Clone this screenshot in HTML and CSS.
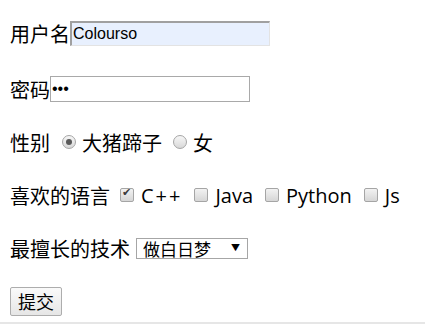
FILE: index.html
```html
<!DOCTYPE html>
<html lang="zh">
<head>
<meta charset="UTF-8">
<title>表单</title>
<link rel="stylesheet" href="styles.css">
</head>
<body>
<form class="form">
    <div class="row row-first">
        <label>用户名</label><input type="text" class="text-input autofill" value="Colourso">
    </div>
    <div class="row">
        <label>密码</label><input type="password" class="text-input" value="123">
    </div>
    <div class="row">
        <span class="label">性别</span>
        <input type="radio" name="sex" class="radio" checked><span>大猪蹄子</span>
        <input type="radio" name="sex" class="radio"><span>女</span>
    </div>
    <div class="row">
        <span class="label label-lang">喜欢的语言</span>
        <input type="checkbox" class="check" checked><span class="latin cpp">C++</span>
        <input type="checkbox" class="check"><span class="latin">Java</span>
        <input type="checkbox" class="check"><span class="latin">Python</span>
        <input type="checkbox" class="check"><span class="latin">Js</span>
    </div>
    <div class="row">
        <span class="label">最擅长的技术</span>
        <span class="select-wrap">
            <select class="select">
                <option>做白日梦</option>
                <option>写代码</option>
            </select>
        </span>
    </div>
    <div class="row">
        <button type="button" class="btn">提交</button>
    </div>
</form>
<div class="bottom-line"></div>
</body>
</html>
```

FILE: styles.css
```css
body {
    margin: 0;
    font-family: "Noto Sans CJK SC", sans-serif;
    font-size: 20px;
    color: #000;
    background: #fff;
}

.form {
    display: flex;
    flex-direction: column;
    gap: 27px;
    padding: 20px 10px 0;
}

.row {
    display: flex;
    align-items: center;
    height: 26px;
    white-space: nowrap;
}

.row-first {
    margin-bottom: 3px;
}

.label {
    margin-right: 12px;
}

.label-lang {
    margin-right: 10px;
}

/* 文本框 */
.text-input {
    box-sizing: border-box;
    width: 200px;
    height: 26px;
    margin: 0;
    padding: 0 1px;
    border: 1px solid #a9a9a9;
    font-family: "Liberation Sans", Arial, sans-serif;
    font-size: 16px;
    outline: none;
}

.autofill {
    height: 25px;
    border-width: 2px 1px 1px 2px;
    border-style: solid;
    border-color: #a0a0a0 #e3e3e3 #e3e3e3 #a0a0a0;
    background: #e8f0fe;
}

/* 单选框 */
.radio {
    appearance: none;
    box-sizing: border-box;
    width: 14px;
    height: 14px;
    margin: 0 6px 0 0;
    border: 1px solid #a5a5a5;
    border-radius: 50%;
    background: linear-gradient(#f7f7f7, #d8d8d8);
    position: relative;
}

.radio:checked::after {
    content: "";
    position: absolute;
    left: 3px;
    top: 3px;
    width: 6px;
    height: 6px;
    border-radius: 50%;
    background: #595959;
}

.radio + span {
    margin-right: 11px;
}

/* 复选框 */
.check {
    appearance: none;
    box-sizing: border-box;
    width: 14px;
    height: 14px;
    margin: 0 7px 0 0;
    border: 1px solid #a5a5a5;
    border-radius: 2px;
    background: linear-gradient(#f2f2f2, #d6d6d6);
    position: relative;
}

.check:checked::after {
    content: "✔";
    position: absolute;
    left: 1px;
    top: -3px;
    font-family: "DejaVu Sans", sans-serif;
    font-size: 11px;
    color: #3c3c3c;
}

.latin {
    font-family: "Open Sans", "Noto Sans", sans-serif;
    font-size: 20px;
    margin-right: 12px;
}

.cpp {
    letter-spacing: 2px;
}

/* 下拉框 */
.select-wrap {
    position: relative;
    display: inline-block;
    margin-left: -6px;
}

.select {
    appearance: none;
    box-sizing: border-box;
    width: 112px;
    height: 21px;
    margin: 0;
    padding: 0 0 0 6px;
    border: 1px solid #a6a6a6;
    border-radius: 0;
    background: #fff;
    font-family: "Noto Sans CJK SC", sans-serif;
    font-size: 17px;
    line-height: 19px;
    color: #000;
    display: block;
}

.select-wrap::after {
    content: "▼";
    position: absolute;
    right: 8px;
    top: 4px;
    font-size: 9px;
    line-height: 12px;
    color: #000;
    pointer-events: none;
}

/* 按钮 */
.btn {
    box-sizing: border-box;
    width: 52px;
    height: 29px;
    margin: 0;
    padding: 0;
    border: 1px solid #adadad;
    border-radius: 2px;
    background: linear-gradient(#fafafa, #e6e6e6);
    font-family: "Noto Sans CJK SC", sans-serif;
    font-size: 18px;
    color: #000;
}

.bottom-line {
    margin-top: 8px;
    border-top: 2px solid #e6e6e6;
}
```
